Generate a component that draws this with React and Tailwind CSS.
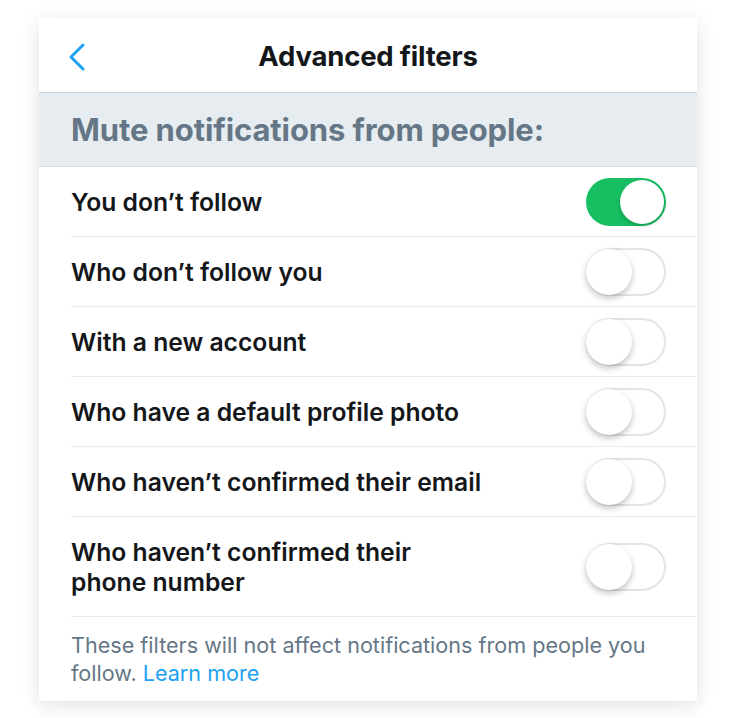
const filters = [
  { label: "You don’t follow", on: true },
  { label: "Who don’t follow you", on: false },
  { label: "With a new account", on: false },
  { label: "Who have a default profile photo", on: false },
  { label: "Who haven’t confirmed their email", on: false },
  { label: "Who haven’t confirmed their\nphone number", on: false, tall: true },
];

function Toggle({ on }) {
  if (on) {
    return (
      <div className="w-[80px] h-[48px] rounded-full bg-[#17bf63] flex items-center justify-end pr-[2px] shrink-0">
        <div className="w-[44px] h-[44px] rounded-full bg-white shadow-[0_2px_4px_rgba(0,0,0,0.2)]" />
      </div>
    );
  }
  return (
    <div className="w-[80px] h-[48px] rounded-full bg-white border-2 border-[#e4e4e4] flex items-center shrink-0">
      <div className="w-[46px] h-[46px] -ml-[2px] rounded-full bg-white shadow-[0_3px_6px_rgba(0,0,0,0.25)]" />
    </div>
  );
}

export default function App() {
  return (
    <div className="w-[736px] h-[718px] bg-white pt-[18px]" style={{ fontFamily: "Inter, 'Noto Sans', sans-serif" }}>
      <div className="mx-[39px] bg-white shadow-[0_4px_18px_rgba(0,0,0,0.12)]">
        <div className="h-[75px] flex items-center relative border-b border-[#ccd6dd] pt-[4px]">
          <svg className="absolute left-[28px] top-[25px]" width="20" height="28" viewBox="0 0 20 28" fill="none">
            <path d="M16 2 L4 14 L16 26" stroke="#1da1f2" strokeWidth="3" strokeLinecap="round" strokeLinejoin="round" />
          </svg>
          <div className="w-full text-center text-[27.5px] font-bold text-[#14171a] tracking-[-0.2px]">Advanced filters</div>
        </div>
        <div className="h-[74px] bg-[#e6ecf0] flex items-center pl-8 pt-[2px] border-b border-[#d8e0e6]">
          <span className="text-[31px] font-bold text-[#657786] tracking-[-0.1px]">Mute notifications from people:</span>
        </div>
        {filters.map((f, i) => (
          <div key={i} className={`ml-8 pr-[31px] flex items-center justify-between border-b border-[#e6ecf0] ${f.tall ? "h-[100px]" : "h-[70px]"}`}>
            <span className="text-[24.7px] font-semibold text-[#14171a] leading-[30px] whitespace-pre-line">{f.label}</span>
            <Toggle on={f.on} />
          </div>
        ))}
        <div className="px-8 pt-[14px] pb-[14px] text-[21.6px] leading-[28px] text-[#657786]">
          These filters will not affect notifications from people you follow. <span className="text-[#1da1f2]">Learn more</span>
        </div>
      </div>
    </div>
  );
}
